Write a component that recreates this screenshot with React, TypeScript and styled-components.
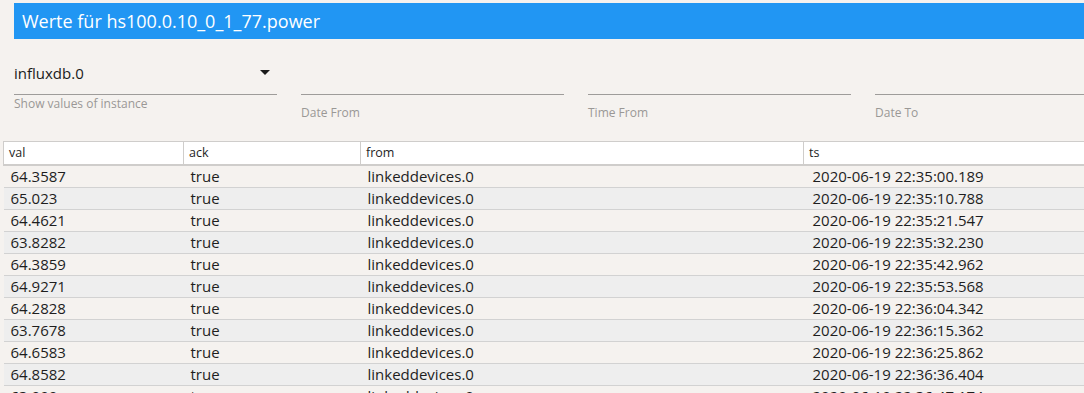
import styled, { createGlobalStyle } from "styled-components";

const rows = [
    ["64.3587", "true", "linkeddevices.0", "2020-06-19 22:35:00.189"],
    ["65.023", "true", "linkeddevices.0", "2020-06-19 22:35:10.788"],
    ["64.4621", "true", "linkeddevices.0", "2020-06-19 22:35:21.547"],
    ["63.8282", "true", "linkeddevices.0", "2020-06-19 22:35:32.230"],
    ["64.3859", "true", "linkeddevices.0", "2020-06-19 22:35:42.962"],
    ["64.9271", "true", "linkeddevices.0", "2020-06-19 22:35:53.568"],
    ["64.2828", "true", "linkeddevices.0", "2020-06-19 22:36:04.342"],
    ["63.7678", "true", "linkeddevices.0", "2020-06-19 22:36:15.362"],
    ["64.6583", "true", "linkeddevices.0", "2020-06-19 22:36:25.862"],
    ["64.8582", "true", "linkeddevices.0", "2020-06-19 22:36:36.404"],
    ["63.999", "true", "linkeddevices.0", "2020-06-19 22:36:47.174"],
];

const columns = [
    { name: "val", width: 180 },
    { name: "ack", width: 177 },
    { name: "from", width: 443 },
    { name: "ts", width: 300 },
];

function App() {
    return (
        <>
            <GlobalStyle />
            <Page>
                <TitleBar>Werte für hs100.0.10_0_1_77.power</TitleBar>
                <Form>
                    <Field>
                        <SelectBox>
                            <span>influxdb.0</span>
                            <Arrow />
                        </SelectBox>
                        <Helper>Show values of instance</Helper>
                    </Field>
                    <Field>
                        <InputBox />
                        <Label>Date From</Label>
                    </Field>
                    <Field>
                        <InputBox />
                        <Label>Time From</Label>
                    </Field>
                    <Field>
                        <InputBox />
                        <Label>Date To</Label>
                    </Field>
                </Form>
                <Table>
                    <colgroup>
                        {columns.map((c) => (
                            <col key={c.name} style={{ width: c.width }} />
                        ))}
                    </colgroup>
                    <thead>
                        <tr>
                            {columns.map((c) => (
                                <Th key={c.name}>{c.name}</Th>
                            ))}
                        </tr>
                    </thead>
                    <tbody>
                        {rows.map((row, index) => (
                            <Tr key={index} $odd={index % 2 === 1}>
                                {row.map((cell, i) => (
                                    <Td key={i} $last={i === 3}>
                                        {cell}
                                    </Td>
                                ))}
                            </Tr>
                        ))}
                    </tbody>
                </Table>
            </Page>
        </>
    );
}

const GlobalStyle = createGlobalStyle`
    html, body {
        height: 393px;
    }
    body {
        margin: 0;
        background: #f5f2ef;
        overflow: hidden;
        font-family: "Open Sans", "Noto Sans", sans-serif;
        color: #1e1e1e;
    }
`;

const Page = styled.div`
    display: flex;
    flex-direction: column;
    padding-top: 3px;
    width: 1084px;
    height: 390px;
    overflow: hidden;
`;

const TitleBar = styled.div`
    margin-left: 14px;
    height: 36px;
    line-height: 36px;
    padding-left: 8px;
    background: #2196f3;
    color: #ffffff;
    font-size: 18px;
    flex-shrink: 0;
`;

const Form = styled.div`
    display: flex;
    gap: 24px;
    padding-left: 14px;
    margin-top: 19px;
    flex-shrink: 0;
`;

const Field = styled.div`
    width: 263px;
    flex-shrink: 0;
    display: flex;
    flex-direction: column;
`;

const SelectBox = styled.div`
    height: 37px;
    display: flex;
    align-items: center;
    justify-content: space-between;
    border-bottom: 1px solid #9e9c9a;
    font-size: 15px;
    color: #1a1a1a;
    padding-bottom: 6px;
    box-sizing: border-box;
`;

const Arrow = styled.span`
    width: 0;
    height: 0;
    margin-right: 7px;
    margin-bottom: 2px;
    border-left: 5px solid transparent;
    border-right: 5px solid transparent;
    border-top: 5px solid #1a1a1a;
`;

const InputBox = styled.div`
    height: 37px;
    border-bottom: 1px solid #9e9c9a;
    box-sizing: border-box;
`;

const Helper = styled.div`
    margin-top: 0;
    font-size: 12px;
    color: #9a9896;
`;

const Label = styled.div`
    margin-top: 9px;
    font-size: 12px;
    color: #9a9896;
`;

const Table = styled.table`
    margin-top: 20px;
    margin-left: 3px;
    table-layout: fixed;
    border-collapse: collapse;
    width: 1100px;
    flex-shrink: 0;
`;

const Th = styled.th`
    height: 23px;
    padding: 0 5px;
    text-align: left;
    font-weight: normal;
    font-size: 12.5px;
    color: #1e1e1e;
    background: #ffffff;
    border: 1px solid #cfcdcb;
    border-bottom: 2px solid #cfcdcb;
    box-sizing: border-box;
`;

const Tr = styled.tr<{ $odd: boolean }>`
    background: ${(p) => (p.$odd ? "#eeeeee" : "#f5f2ef")};
`;

const Td = styled.td<{ $last: boolean }>`
    height: 21px;
    padding: 0 0 0 ${(p) => (p.$last ? "9px" : "7px")};
    font-size: 15px;
    line-height: 21px;
    color: #1e1e1e;
    border-bottom: 1px solid #d2d2d2;
    white-space: nowrap;
`;

export default App;
